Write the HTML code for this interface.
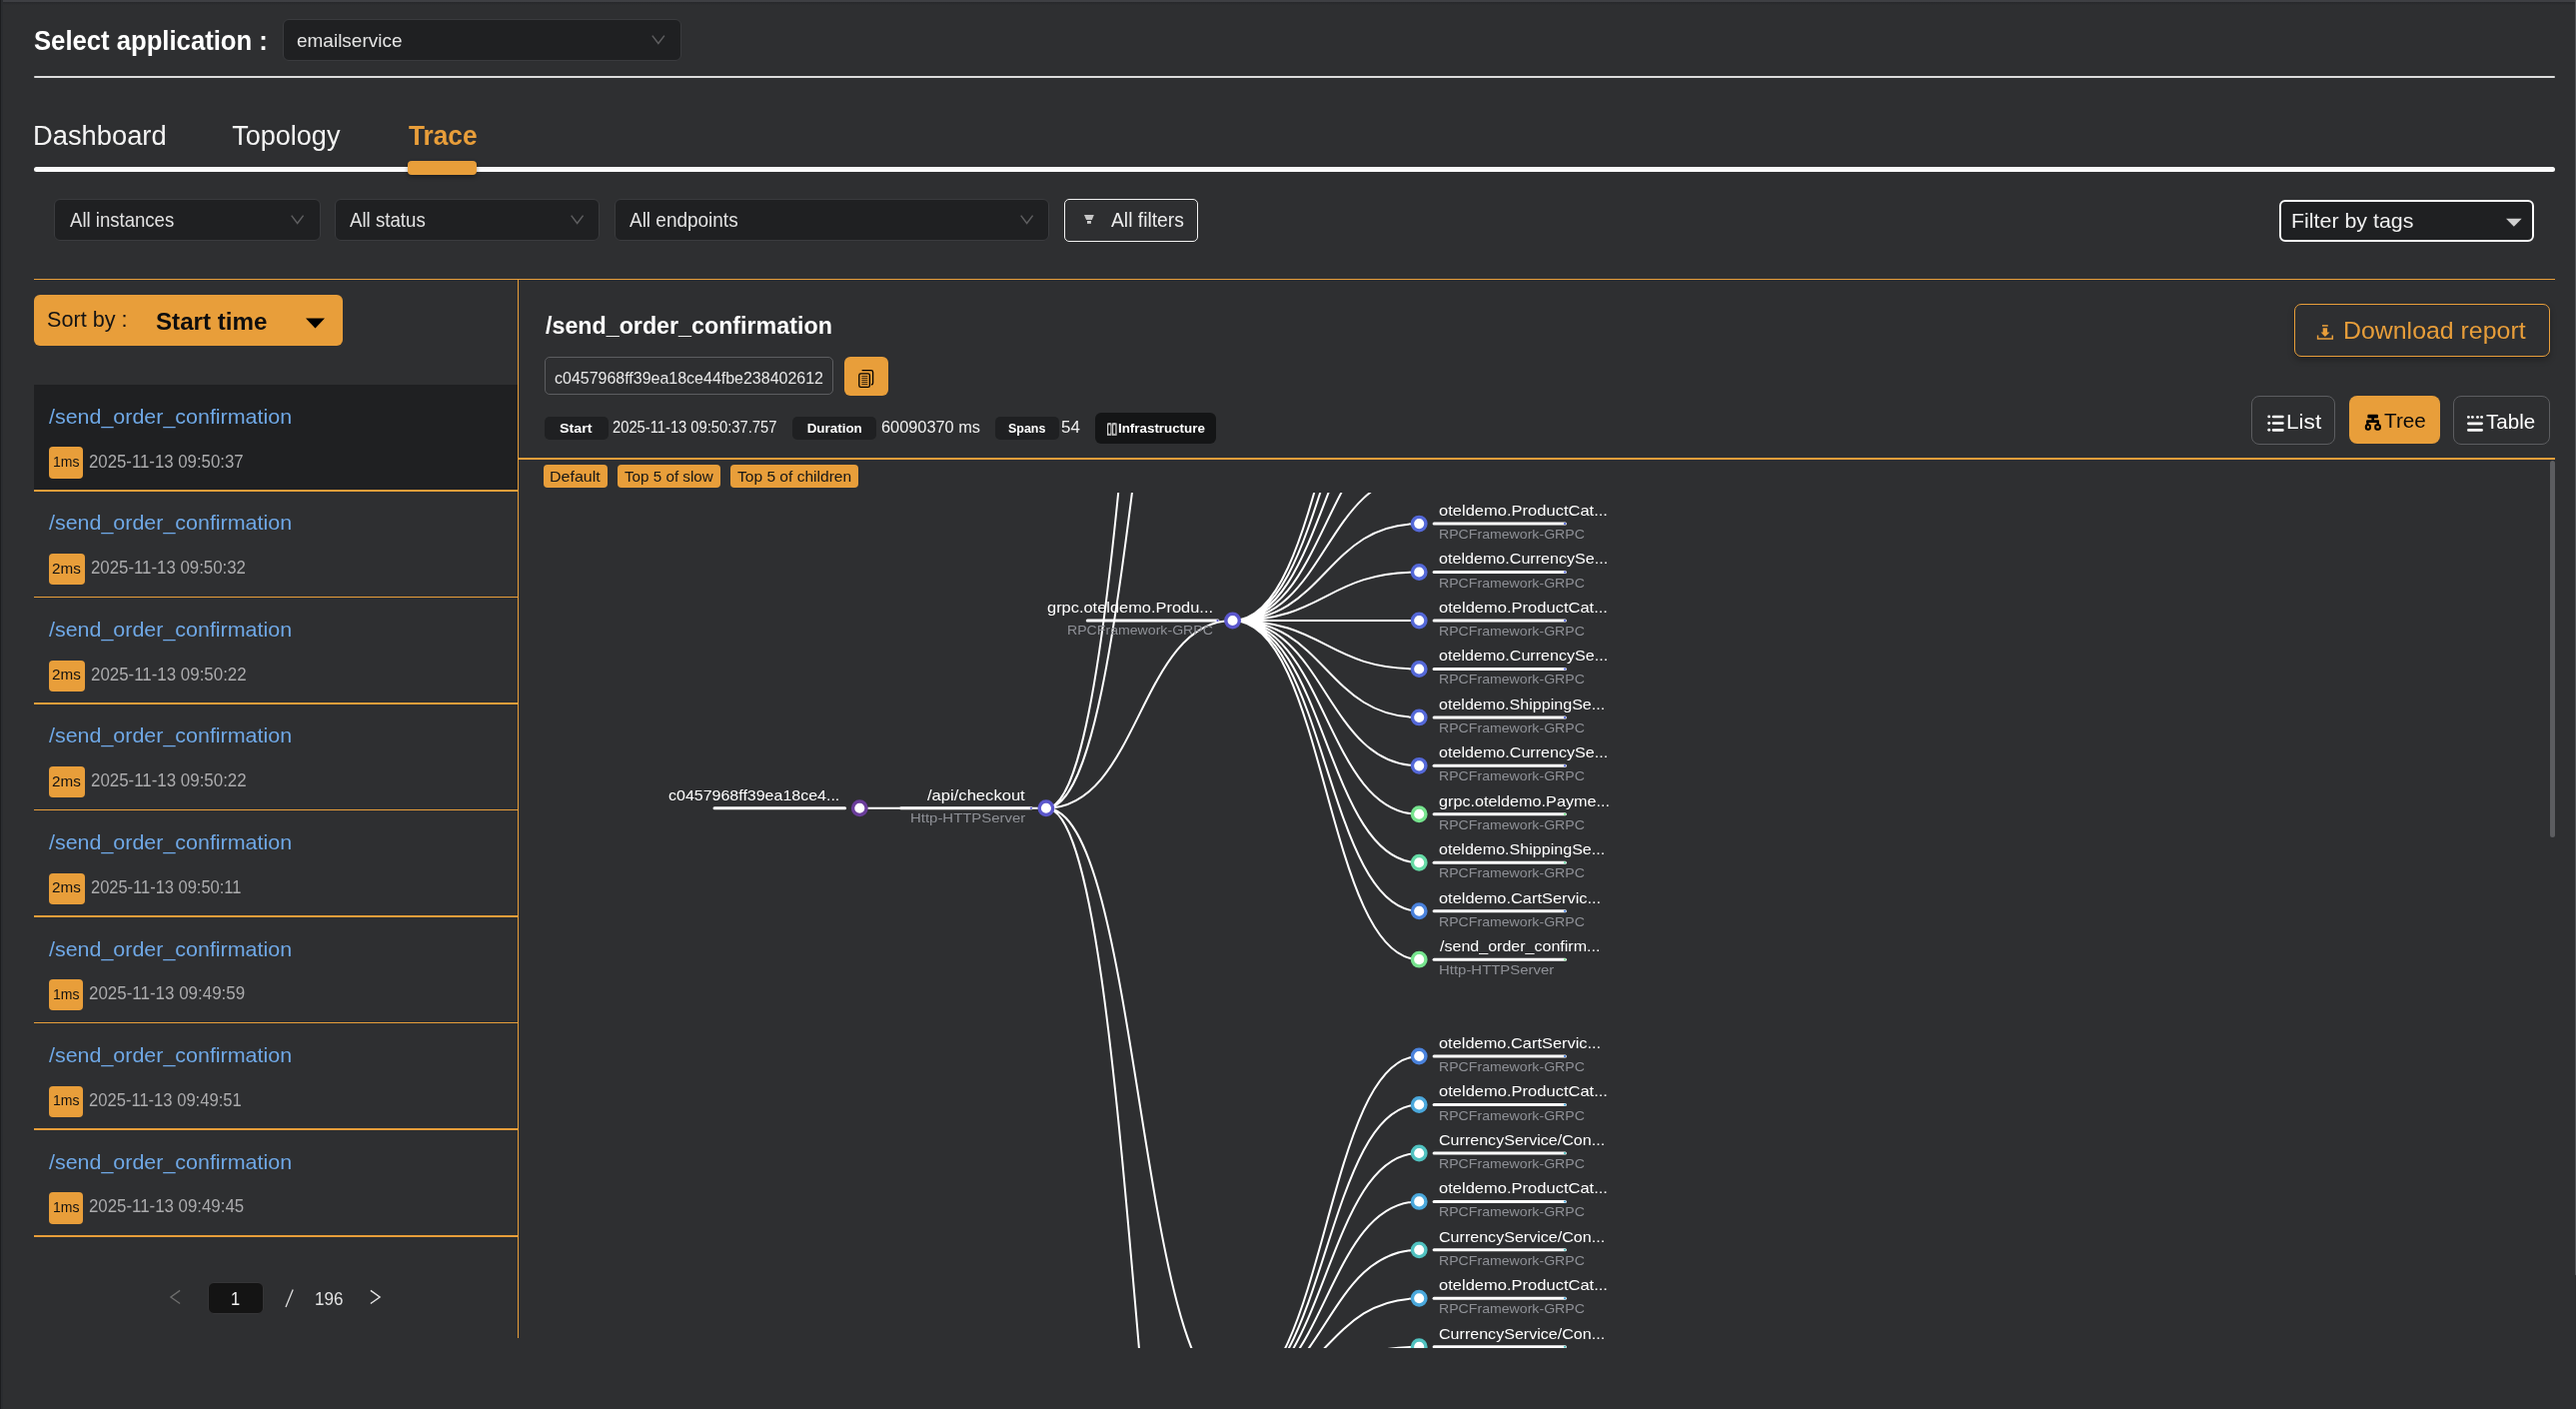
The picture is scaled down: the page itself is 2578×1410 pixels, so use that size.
<!DOCTYPE html>
<html><head><meta charset="utf-8"><title>Trace</title>
<style>
html,body{margin:0;padding:0;}
body{width:2578px;height:1410px;overflow:hidden;background:#2e2f31;position:relative;font-family:"Liberation Sans",sans-serif;}
.a{position:absolute;}
.t{position:absolute;white-space:pre;line-height:1;font-family:"Liberation Sans",sans-serif;}
#tx{position:absolute;left:0;top:0;width:2578px;height:1410px;will-change:transform;}
#tc{will-change:transform;position:absolute;left:519px;top:493px;width:2032px;height:856px;overflow:hidden;}
#tc .t{margin-left:-519px;margin-top:-493px;}
</style></head><body>
<div class="a" style="left:0.00px;top:0.00px;width:2578.00px;height:2.10px;background:#3e3f43;"></div><div class="a" style="left:0.00px;top:2.10px;width:2578.00px;height:2.50px;background:linear-gradient(#26272a,#2e2f31);"></div><div class="a" style="left:0.00px;top:0.00px;width:1.20px;height:1410.00px;background:#1c1d1f;"></div><div class="a" style="left:1.20px;top:0.00px;width:2.30px;height:1410.00px;background:#2a2c2f;"></div><div class="a" style="left:2576.80px;top:0.00px;width:1.20px;height:1276.00px;background:#58595c;border-radius:0.6px;"></div><div class="a" style="left:282.50px;top:19.20px;width:399.00px;height:42.10px;background:#1f2022;border:1px solid #3a3b3e;box-sizing:border-box;border-radius:6px;"></div><svg class="a" style="left:650px;top:33px" width="18" height="14"><polyline points="2.8,2.6 8.85,10.5 14.9,2.6" fill="none" stroke="#5e5e60" stroke-width="1.5"/></svg><div class="a" style="left:34.00px;top:75.60px;width:2523.00px;height:2.50px;background:#dcdcdc;border-radius:1px;"></div><div class="a" style="left:34.00px;top:166.80px;width:2523.00px;height:5.00px;background:#fafafa;border-radius:3px;"></div><div class="a" style="left:407.50px;top:160.60px;width:69.50px;height:14.40px;background:#e89e3a;border-radius:4px;box-shadow:0 2px 4px rgba(0,0,0,.35);"></div><div class="a" style="left:54.40px;top:199.30px;width:266.30px;height:42.00px;background:#1f2022;border:1px solid #3a3b3e;box-sizing:border-box;border-radius:6px;"></div><svg class="a" style="left:290.2px;top:213px" width="16" height="14"><polyline points="1.7,2.6 7.65,10.5 13.6,2.6" fill="none" stroke="#5e5e60" stroke-width="1.5"/></svg><div class="a" style="left:334.70px;top:199.30px;width:265.50px;height:42.00px;background:#1f2022;border:1px solid #3a3b3e;box-sizing:border-box;border-radius:6px;"></div><svg class="a" style="left:569.7px;top:213px" width="16" height="14"><polyline points="1.7,2.6 7.65,10.5 13.6,2.6" fill="none" stroke="#5e5e60" stroke-width="1.5"/></svg><div class="a" style="left:614.90px;top:199.30px;width:435.60px;height:42.00px;background:#1f2022;border:1px solid #3a3b3e;box-sizing:border-box;border-radius:6px;"></div><svg class="a" style="left:1020.0px;top:213px" width="16" height="14"><polyline points="1.7,2.6 7.65,10.5 13.6,2.6" fill="none" stroke="#5e5e60" stroke-width="1.5"/></svg><div class="a" style="left:1065.20px;top:199.20px;width:133.40px;height:42.50px;border:1.5px solid #f2f2f2;box-sizing:border-box;border-radius:5px;"></div><svg class="a" style="left:1080px;top:210px" width="20" height="18" viewBox="1080 210 20 18"><path d="M1085,214.9 H1094.8 L1092.9,219.9 H1087.1 Z" fill="#c6c6c6"/><rect x="1088" y="221" width="3.9" height="2.8" fill="#cdcdcd"/></svg><div class="a" style="left:2281.30px;top:199.50px;width:255.20px;height:42.20px;background:#1f2022;border:2px solid #fafafa;box-sizing:border-box;border-radius:6px;"></div><svg class="a" style="left:2506px;top:217px" width="20" height="12"><polygon points="2,1.7 17.7,1.7 9.85,9.8" fill="#cfcfcf"/></svg><div class="a" style="left:34.00px;top:278.50px;width:2523.00px;height:1.50px;background:#e89e3a;"></div><div class="a" style="left:517.60px;top:279.00px;width:1.40px;height:1060.00px;background:#e89e3a;"></div><div class="a" style="left:518.00px;top:458.40px;width:2039.00px;height:1.50px;background:#e89e3a;"></div><div class="a" style="left:34.00px;top:295.00px;width:309.00px;height:51.00px;background:#e89e3a;border-radius:6px;"></div><svg class="a" style="left:304px;top:316px" width="24" height="14"><polygon points="2,2.4 21,2.4 11.5,12.4" fill="#000"/></svg><div class="a" style="left:34.00px;top:384.50px;width:483.60px;height:105.75px;background:#1f2022;"></div><div class="a" style="left:34.00px;top:490.15px;width:483.60px;height:1.50px;background:#e89e3a;"></div><div class="a" style="left:48.90px;top:447.40px;width:34.30px;height:31.30px;background:#e89e3a;border-radius:4px;"></div><div class="a" style="left:34.00px;top:596.70px;width:483.60px;height:1.50px;background:#e89e3a;"></div><div class="a" style="left:48.90px;top:553.95px;width:36.30px;height:31.30px;background:#e89e3a;border-radius:4px;"></div><div class="a" style="left:34.00px;top:703.25px;width:483.60px;height:1.50px;background:#e89e3a;"></div><div class="a" style="left:48.90px;top:660.50px;width:36.30px;height:31.30px;background:#e89e3a;border-radius:4px;"></div><div class="a" style="left:34.00px;top:809.80px;width:483.60px;height:1.50px;background:#e89e3a;"></div><div class="a" style="left:48.90px;top:767.05px;width:36.30px;height:31.30px;background:#e89e3a;border-radius:4px;"></div><div class="a" style="left:34.00px;top:916.35px;width:483.60px;height:1.50px;background:#e89e3a;"></div><div class="a" style="left:48.90px;top:873.60px;width:36.30px;height:31.30px;background:#e89e3a;border-radius:4px;"></div><div class="a" style="left:34.00px;top:1022.90px;width:483.60px;height:1.50px;background:#e89e3a;"></div><div class="a" style="left:48.90px;top:980.15px;width:34.30px;height:31.30px;background:#e89e3a;border-radius:4px;"></div><div class="a" style="left:34.00px;top:1129.45px;width:483.60px;height:1.50px;background:#e89e3a;"></div><div class="a" style="left:48.90px;top:1086.70px;width:34.30px;height:31.30px;background:#e89e3a;border-radius:4px;"></div><div class="a" style="left:34.00px;top:1236.00px;width:483.60px;height:1.50px;background:#e89e3a;"></div><div class="a" style="left:48.90px;top:1193.25px;width:34.30px;height:31.30px;background:#e89e3a;border-radius:4px;"></div><svg class="a" style="left:166px;top:1288px" width="18" height="20"><polyline points="14.1,3.4 4.9,9.95 14.1,16.5" fill="none" stroke="#6e6e6e" stroke-width="1.3"/></svg><div class="a" style="left:207.80px;top:1283.20px;width:56.10px;height:31.40px;background:#141414;border:1px solid #353537;box-sizing:border-box;border-radius:6px;"></div><svg class="a" style="left:280px;top:1288px" width="20" height="24"><line x1="6" y1="20" x2="13.2" y2="2.6" stroke="#dedede" stroke-width="1.3"/></svg><svg class="a" style="left:366px;top:1288px" width="18" height="20"><polyline points="4.9,3.4 14.1,9.95 4.9,16.5" fill="none" stroke="#e6e6e6" stroke-width="1.4"/></svg><div class="a" style="left:545.20px;top:357.20px;width:288.60px;height:38.20px;border:1px solid #5c5d60;box-sizing:border-box;border-radius:5px;"></div><div class="a" style="left:845.00px;top:356.90px;width:44.10px;height:39.10px;background:#e89e3a;border-radius:6px;"></div><svg class="a" style="left:856px;top:368px" width="22" height="22" viewBox="856 368 22 22">
<path d="M862.6,370.7 H871.8 Q873.6,370.7 873.6,372.5 V383.2 Q873.6,385 871.9,385" fill="none" stroke="#000" stroke-width="1.3"/>
<rect x="859.8" y="373.8" width="10.6" height="13.5" rx="1.6" fill="none" stroke="#000" stroke-width="1.3"/>
<path d="M862.3,376.6 H868.3 M862.3,378.6 H868.3 M862.3,380.6 H868.3 M862.3,382.6 H868.3 M862.3,384.6 H868.3" stroke="#000" stroke-width="0.9" opacity="0.85"/>
</svg><div class="a" style="left:545.30px;top:417.10px;width:63.30px;height:23.40px;background:#1f2022;border-radius:5px;"></div><div class="a" style="left:793.20px;top:417.10px;width:84.00px;height:23.40px;background:#1f2022;border-radius:5px;"></div><div class="a" style="left:996.00px;top:417.10px;width:63.60px;height:23.40px;background:#1f2022;border-radius:5px;"></div><div class="a" style="left:1096.10px;top:413.10px;width:120.70px;height:30.60px;background:#141516;border-radius:6px;"></div><svg class="a" style="left:1104px;top:420px" width="18" height="20" viewBox="1104 420 18 20">
<rect x="1108" y="423.3" width="4.3" height="12.7" rx="0.8" fill="#a6a6a6"/><rect x="1112.7" y="423.3" width="5.1" height="12.7" rx="0.8" fill="#a6a6a6"/>
<path d="M1108.6,435.5 V424.4 Q1108.6,423.8 1109.8,423.8 H1111.5 M1113.3,435.5 V424.4 Q1113.3,423.8 1114.5,423.8 H1116.4" fill="none" stroke="#d0d0d0" stroke-width="1"/>
<rect x="1109.4" y="425.2" width="1.8" height="8.7" rx="0.9" fill="#000"/><rect x="1114.3" y="425.2" width="1.8" height="8.7" rx="0.9" fill="#000"/>
</svg><div class="a" style="left:2296.00px;top:304.20px;width:255.80px;height:52.60px;border:1.5px solid #e89e3a;box-sizing:border-box;border-radius:7px;box-shadow:0 3px 6px rgba(0,0,0,.28);"></div><svg class="a" style="left:2316px;top:322px" width="22" height="22" viewBox="2316 322 22 22">
<rect x="2324" y="325" width="5.8" height="1.8" fill="#e89e3a" opacity="0.85"/>
<path d="M2324.7,328.2 H2329.1 V332.6 H2331.6 L2326.9,337 L2322.6,332.6 H2324.7 Z" fill="#e89e3a"/>
<path d="M2319.6,335.6 V339 H2334.3 V335.6" fill="none" stroke="#e89e3a" stroke-width="1.5"/>
</svg><div class="a" style="left:2253.00px;top:396.30px;width:83.90px;height:49.20px;border:1px solid #5c5d60;box-sizing:border-box;border-radius:8px;"></div><svg class="a" style="left:2266px;top:412px" width="24" height="24" viewBox="2266 412 24 24">
<circle cx="2270.8" cy="416.9" r="1.45" fill="#fff"/><circle cx="2270.8" cy="423.5" r="1.45" fill="#fff"/><circle cx="2270.8" cy="430.3" r="1.45" fill="#fff"/>
<path d="M2275.1,417 H2284.4 M2275.1,423.5 H2284.4 M2275.1,430.4 H2284.4" stroke="#fff" stroke-width="2.7" stroke-linecap="round"/>
</svg><div class="a" style="left:2351.00px;top:396.00px;width:91.00px;height:48.00px;background:#e89e3a;border-radius:8px;"></div><svg class="a" style="left:2364px;top:412px" width="22" height="22" viewBox="2364 412 22 22">
<rect x="2369.4" y="414.8" width="10.6" height="3.8" rx="1" fill="#000"/>
<rect x="2373.4" y="418" width="2.6" height="2.8" fill="#000"/>
<rect x="2368.3" y="420.3" width="12.6" height="2.6" rx="0.6" fill="#000"/>
<rect x="2368.3" y="421" width="2.3" height="4" fill="#000"/>
<rect x="2378.6" y="421" width="2.3" height="4" fill="#000"/>
<rect x="2367.85" y="425.2" width="4.1" height="4.4" rx="1.4" fill="none" stroke="#000" stroke-width="2.1"/>
<rect x="2377.25" y="425.2" width="4.6" height="4.4" rx="1.4" fill="none" stroke="#000" stroke-width="2.1"/>
</svg><div class="a" style="left:2455.00px;top:396.30px;width:96.80px;height:49.20px;border:1px solid #5c5d60;box-sizing:border-box;border-radius:8px;"></div><svg class="a" style="left:2466px;top:412px" width="22" height="22" viewBox="2466 412 22 22">
<circle cx="2470.4" cy="417.4" r="1.4" fill="#fff"/><circle cx="2474.4" cy="417.4" r="1.4" fill="#fff"/><circle cx="2479.5" cy="417.4" r="1.4" fill="#fff"/><circle cx="2483.6" cy="417.4" r="1.4" fill="#fff"/>
<path d="M2470.4,423.8 H2483.6 M2470.4,430.4 H2483.6" stroke="#fff" stroke-width="2.7" stroke-linecap="round"/>
</svg><div class="a" style="left:544.20px;top:465.10px;width:63.80px;height:22.80px;background:#e89e3a;border-radius:4px;"></div><div class="a" style="left:618.10px;top:465.10px;width:102.70px;height:22.80px;background:#e89e3a;border-radius:4px;"></div><div class="a" style="left:731.00px;top:465.10px;width:128.00px;height:22.80px;background:#e89e3a;border-radius:4px;"></div><div class="a" style="left:2552.00px;top:460.80px;width:5.00px;height:377.20px;background:#5c5d60;border-radius:2.5px;"></div>
<div id="tx"><span class="t" style="left:33.76px;top:27.00px;font-size:27.2px;color:#ffffff;font-weight:700;transform:scaleX(0.9439);transform-origin:0 0;">Select application :</span><span class="t" style="left:296.67px;top:32.00px;font-size:18.5px;color:#e4e4e4;transform:scaleX(1.0257);transform-origin:0 0;">emailservice</span><span class="t" style="left:32.88px;top:123.00px;font-size:27px;color:#f4f4f4;transform:scaleX(1.0117);transform-origin:0 0;">Dashboard</span><span class="t" style="left:232.30px;top:123.00px;font-size:27px;color:#f4f4f4;">Topology</span><span class="t" style="left:408.50px;top:123.00px;font-size:27px;color:#e89e3a;font-weight:700;transform:scaleX(0.9714);transform-origin:0 0;">Trace</span><span class="t" style="left:69.80px;top:210.00px;font-size:20.3px;color:#e2e2e2;transform:scaleX(0.9150);transform-origin:0 0;">All instances</span><span class="t" style="left:350.10px;top:210.00px;font-size:20.3px;color:#e2e2e2;transform:scaleX(0.9207);transform-origin:0 0;">All status</span><span class="t" style="left:630.30px;top:210.00px;font-size:20.3px;color:#e2e2e2;transform:scaleX(0.9353);transform-origin:0 0;">All endpoints</span><span class="t" style="left:1111.80px;top:211.00px;font-size:19.5px;color:#ececec;transform:scaleX(0.9890);transform-origin:0 0;">All filters</span><span class="t" style="left:2292.76px;top:210.00px;font-size:21px;color:#f0f0f0;transform:scaleX(1.0186);transform-origin:0 0;">Filter by tags</span><span class="t" style="left:46.99px;top:310.00px;font-size:21.5px;color:#141414;transform:scaleX(1.0052);transform-origin:0 0;">Sort by :</span><span class="t" style="left:155.96px;top:311.00px;font-size:23.3px;color:#0e0e0e;font-weight:700;transform:scaleX(1.0377);transform-origin:0 0;">Start time</span><span class="t" style="left:49.30px;top:407.00px;font-size:20.6px;color:#6fa8e6;transform:scaleX(1.0409);transform-origin:0 0;">/send_order_confirmation</span><span class="t" style="left:52.50px;top:454.00px;font-size:15.5px;color:#111;transform:scaleX(0.9036);transform-origin:0 0;">1ms</span><span class="t" style="left:88.78px;top:453.00px;font-size:18.2px;color:#ababad;transform:scaleX(0.9229);transform-origin:0 0;">2025-11-13 09:50:37</span><span class="t" style="left:49.30px;top:513.00px;font-size:20.6px;color:#6fa8e6;transform:scaleX(1.0409);transform-origin:0 0;">/send_order_confirmation</span><span class="t" style="left:52.32px;top:561.00px;font-size:15.5px;color:#111;transform:scaleX(0.9821);transform-origin:0 0;">2ms</span><span class="t" style="left:90.78px;top:559.00px;font-size:18.2px;color:#ababad;transform:scaleX(0.9247);transform-origin:0 0;">2025-11-13 09:50:32</span><span class="t" style="left:49.30px;top:620.00px;font-size:20.6px;color:#6fa8e6;transform:scaleX(1.0409);transform-origin:0 0;">/send_order_confirmation</span><span class="t" style="left:52.32px;top:667.00px;font-size:15.5px;color:#111;transform:scaleX(0.9821);transform-origin:0 0;">2ms</span><span class="t" style="left:90.77px;top:666.00px;font-size:18.2px;color:#ababad;transform:scaleX(0.9289);transform-origin:0 0;">2025-11-13 09:50:22</span><span class="t" style="left:49.30px;top:726.00px;font-size:20.6px;color:#6fa8e6;transform:scaleX(1.0409);transform-origin:0 0;">/send_order_confirmation</span><span class="t" style="left:52.32px;top:774.00px;font-size:15.5px;color:#111;transform:scaleX(0.9821);transform-origin:0 0;">2ms</span><span class="t" style="left:90.77px;top:772.00px;font-size:18.2px;color:#ababad;transform:scaleX(0.9289);transform-origin:0 0;">2025-11-13 09:50:22</span><span class="t" style="left:49.30px;top:833.00px;font-size:20.6px;color:#6fa8e6;transform:scaleX(1.0409);transform-origin:0 0;">/send_order_confirmation</span><span class="t" style="left:52.32px;top:880.00px;font-size:15.5px;color:#111;transform:scaleX(0.9821);transform-origin:0 0;">2ms</span><span class="t" style="left:90.80px;top:879.00px;font-size:18.2px;color:#ababad;transform:scaleX(0.9049);transform-origin:0 0;">2025-11-13 09:50:11</span><span class="t" style="left:49.30px;top:940.00px;font-size:20.6px;color:#6fa8e6;transform:scaleX(1.0409);transform-origin:0 0;">/send_order_confirmation</span><span class="t" style="left:52.50px;top:987.00px;font-size:15.5px;color:#111;transform:scaleX(0.9036);transform-origin:0 0;">1ms</span><span class="t" style="left:88.77px;top:985.00px;font-size:18.2px;color:#ababad;transform:scaleX(0.9319);transform-origin:0 0;">2025-11-13 09:49:59</span><span class="t" style="left:49.30px;top:1046.00px;font-size:20.6px;color:#6fa8e6;transform:scaleX(1.0409);transform-origin:0 0;">/send_order_confirmation</span><span class="t" style="left:52.50px;top:1093.00px;font-size:15.5px;color:#111;transform:scaleX(0.9036);transform-origin:0 0;">1ms</span><span class="t" style="left:88.79px;top:1092.00px;font-size:18.2px;color:#ababad;transform:scaleX(0.9114);transform-origin:0 0;">2025-11-13 09:49:51</span><span class="t" style="left:49.30px;top:1153.00px;font-size:20.6px;color:#6fa8e6;transform:scaleX(1.0409);transform-origin:0 0;">/send_order_confirmation</span><span class="t" style="left:52.50px;top:1200.00px;font-size:15.5px;color:#111;transform:scaleX(0.9036);transform-origin:0 0;">1ms</span><span class="t" style="left:88.77px;top:1198.00px;font-size:18.2px;color:#ababad;transform:scaleX(0.9259);transform-origin:0 0;">2025-11-13 09:49:45</span><span class="t" style="left:231.01px;top:1292.00px;font-size:17.5px;color:#f2f2f2;transform:scaleX(0.9375);transform-origin:0 0;">1</span><span class="t" style="left:314.64px;top:1292.00px;font-size:17.8px;color:#e2e2e2;transform:scaleX(0.9571);transform-origin:0 0;">196</span><span class="t" style="left:545.70px;top:314.00px;font-size:24.4px;color:#ffffff;font-weight:700;transform:scaleX(0.9533);transform-origin:0 0;">/send_order_confirmation</span><span class="t" style="left:554.88px;top:370.00px;font-size:17.4px;color:#e8e8e8;transform:scaleX(0.9189);transform-origin:0 0;">c0457968ff39ea18ce44fbe238402612</span><span class="t" style="left:560.38px;top:422.00px;font-size:13.4px;color:#ffffff;font-weight:700;transform:scaleX(1.0690);transform-origin:0 0;">Start</span><span class="t" style="left:612.77px;top:420.00px;font-size:15.8px;color:#f0f0f0;transform:scaleX(0.9326);transform-origin:0 0;">2025-11-13 09:50:37.757</span><span class="t" style="left:807.70px;top:422.00px;font-size:13.4px;color:#ffffff;font-weight:700;">Duration</span><span class="t" style="left:881.87px;top:420.00px;font-size:15.8px;color:#f0f0f0;transform:scaleX(1.0340);transform-origin:0 0;">60090370 ms</span><span class="t" style="left:1008.77px;top:422.00px;font-size:13.4px;color:#ffffff;font-weight:700;transform:scaleX(0.9282);transform-origin:0 0;">Spans</span><span class="t" style="left:1062.43px;top:420.00px;font-size:15.8px;color:#f0f0f0;transform:scaleX(1.0688);transform-origin:0 0;">54</span><span class="t" style="left:1118.60px;top:422.00px;font-size:13.4px;color:#ffffff;font-weight:700;transform:scaleX(0.9977);transform-origin:0 0;">Infrastructure</span><span class="t" style="left:2345.47px;top:319.00px;font-size:24.5px;color:#e89e3a;transform:scaleX(1.0157);transform-origin:0 0;">Download report</span><span class="t" style="left:2287.76px;top:412.00px;font-size:20.2px;color:#ffffff;transform:scaleX(1.1207);transform-origin:0 0;">List</span><span class="t" style="left:2386.00px;top:411.00px;font-size:20.5px;color:#0a0a0a;transform:scaleX(1.0098);transform-origin:0 0;">Tree</span><span class="t" style="left:2487.90px;top:412.00px;font-size:20.2px;color:#ffffff;transform:scaleX(1.0188);transform-origin:0 0;">Table</span><span class="t" style="left:550.12px;top:470.00px;font-size:14.8px;color:#161616;transform:scaleX(1.0826);transform-origin:0 0;">Default</span><span class="t" style="left:625.10px;top:470.00px;font-size:14.8px;color:#161616;transform:scaleX(1.0276);transform-origin:0 0;">Top 5 of slow</span><span class="t" style="left:738.00px;top:470.00px;font-size:14.8px;color:#161616;transform:scaleX(1.0509);transform-origin:0 0;">Top 5 of children</span></div>
<svg class="a" style="left:519px;top:493px;overflow:hidden" width="2032" height="856" viewBox="519 493 2032 856"><g><path d="M860.30,808.7H1046.93 M1046.93,808.70C1140.25,808.70 1140.25,-292.30 1233.57,-292.30 M1046.93,808.70C1140.25,808.70 1140.25,61.60 1233.57,61.60 M1046.93,808.70C1140.25,808.70 1140.25,621.00 1233.57,621.00 M1046.93,808.70C1140.25,808.70 1140.25,1396.30 1233.57,1396.30 M1046.93,808.70C1140.25,808.70 1140.25,1897.10 1233.57,1897.10 M1233.57,621.00C1326.88,621.00 1326.88,281.85 1420.20,281.85 M1233.57,621.00C1326.88,621.00 1326.88,330.30 1420.20,330.30 M1233.57,621.00C1326.88,621.00 1326.88,378.75 1420.20,378.75 M1233.57,621.00C1326.88,621.00 1326.88,427.20 1420.20,427.20 M1233.57,621.00C1326.88,621.00 1326.88,475.65 1420.20,475.65 M1233.57,621.00C1326.88,621.00 1326.88,524.10 1420.20,524.10 M1233.57,621.00C1326.88,621.00 1326.88,572.55 1420.20,572.55 M1233.57,621.00C1326.88,621.00 1326.88,621.00 1420.20,621.00 M1233.57,621.00C1326.88,621.00 1326.88,669.45 1420.20,669.45 M1233.57,621.00C1326.88,621.00 1326.88,717.90 1420.20,717.90 M1233.57,621.00C1326.88,621.00 1326.88,766.35 1420.20,766.35 M1233.57,621.00C1326.88,621.00 1326.88,814.80 1420.20,814.80 M1233.57,621.00C1326.88,621.00 1326.88,863.25 1420.20,863.25 M1233.57,621.00C1326.88,621.00 1326.88,911.70 1420.20,911.70 M1233.57,621.00C1326.88,621.00 1326.88,960.15 1420.20,960.15 M1233.57,1396.30C1326.88,1396.30 1326.88,1057.05 1420.20,1057.05 M1233.57,1396.30C1326.88,1396.30 1326.88,1105.50 1420.20,1105.50 M1233.57,1396.30C1326.88,1396.30 1326.88,1153.95 1420.20,1153.95 M1233.57,1396.30C1326.88,1396.30 1326.88,1202.40 1420.20,1202.40 M1233.57,1396.30C1326.88,1396.30 1326.88,1250.85 1420.20,1250.85 M1233.57,1396.30C1326.88,1396.30 1326.88,1299.30 1420.20,1299.30 M1233.57,1396.30C1326.88,1396.30 1326.88,1347.75 1420.20,1347.75 M1233.57,1396.30C1326.88,1396.30 1326.88,1396.20 1420.20,1396.20 M1233.57,1396.30C1326.88,1396.30 1326.88,1444.65 1420.20,1444.65 M1233.57,1396.30C1326.88,1396.30 1326.88,1493.10 1420.20,1493.10 M1233.57,1396.30C1326.88,1396.30 1326.88,1541.55 1420.20,1541.55 M1233.57,1396.30C1326.88,1396.30 1326.88,1590.00 1420.20,1590.00 M1233.57,1396.30C1326.88,1396.30 1326.88,1638.45 1420.20,1638.45 M1233.57,1396.30C1326.88,1396.30 1326.88,1686.90 1420.20,1686.90 M1233.57,1396.30C1326.88,1396.30 1326.88,1735.35 1420.20,1735.35" fill="none" stroke="#ffffff" stroke-width="2"/><line x1="715.00" y1="808.70" x2="845.60" y2="808.70" stroke="#ffffff" stroke-width="3" stroke-linecap="round"/><line x1="901.63" y1="808.70" x2="1032.23" y2="808.70" stroke="#ffffff" stroke-width="3" stroke-linecap="round"/><line x1="1031.73" y1="808.70" x2="1032.13" y2="808.70" stroke="#5b57cc" stroke-width="2" stroke-linecap="round"/><line x1="1088.27" y1="621.00" x2="1218.87" y2="621.00" stroke="#ffffff" stroke-width="3" stroke-linecap="round"/><line x1="1218.37" y1="621.00" x2="1218.77" y2="621.00" stroke="#5b57cc" stroke-width="2" stroke-linecap="round"/><line x1="1435.10" y1="524.10" x2="1566.40" y2="524.10" stroke="#ffffff" stroke-width="3" stroke-linecap="round"/><line x1="1565.90" y1="524.10" x2="1566.30" y2="524.10" stroke="#5468d8" stroke-width="2" stroke-linecap="round"/><line x1="1435.10" y1="572.55" x2="1566.40" y2="572.55" stroke="#ffffff" stroke-width="3" stroke-linecap="round"/><line x1="1565.90" y1="572.55" x2="1566.30" y2="572.55" stroke="#5468d8" stroke-width="2" stroke-linecap="round"/><line x1="1435.10" y1="621.00" x2="1566.40" y2="621.00" stroke="#ffffff" stroke-width="3" stroke-linecap="round"/><line x1="1565.90" y1="621.00" x2="1566.30" y2="621.00" stroke="#5468d8" stroke-width="2" stroke-linecap="round"/><line x1="1435.10" y1="669.45" x2="1566.40" y2="669.45" stroke="#ffffff" stroke-width="3" stroke-linecap="round"/><line x1="1565.90" y1="669.45" x2="1566.30" y2="669.45" stroke="#5468d8" stroke-width="2" stroke-linecap="round"/><line x1="1435.10" y1="717.90" x2="1566.40" y2="717.90" stroke="#ffffff" stroke-width="3" stroke-linecap="round"/><line x1="1565.90" y1="717.90" x2="1566.30" y2="717.90" stroke="#5468d8" stroke-width="2" stroke-linecap="round"/><line x1="1435.10" y1="766.35" x2="1566.40" y2="766.35" stroke="#ffffff" stroke-width="3" stroke-linecap="round"/><line x1="1565.90" y1="766.35" x2="1566.30" y2="766.35" stroke="#5468d8" stroke-width="2" stroke-linecap="round"/><line x1="1435.10" y1="814.80" x2="1566.40" y2="814.80" stroke="#ffffff" stroke-width="3" stroke-linecap="round"/><line x1="1565.90" y1="814.80" x2="1566.30" y2="814.80" stroke="#76e48e" stroke-width="2" stroke-linecap="round"/><line x1="1435.10" y1="863.25" x2="1566.40" y2="863.25" stroke="#ffffff" stroke-width="3" stroke-linecap="round"/><line x1="1565.90" y1="863.25" x2="1566.30" y2="863.25" stroke="#65dba6" stroke-width="2" stroke-linecap="round"/><line x1="1435.10" y1="911.70" x2="1566.40" y2="911.70" stroke="#ffffff" stroke-width="3" stroke-linecap="round"/><line x1="1565.90" y1="911.70" x2="1566.30" y2="911.70" stroke="#4a82dc" stroke-width="2" stroke-linecap="round"/><line x1="1435.10" y1="960.15" x2="1566.40" y2="960.15" stroke="#ffffff" stroke-width="3" stroke-linecap="round"/><line x1="1565.90" y1="960.15" x2="1566.30" y2="960.15" stroke="#76e48e" stroke-width="2" stroke-linecap="round"/><line x1="1435.10" y1="1057.05" x2="1566.40" y2="1057.05" stroke="#ffffff" stroke-width="3" stroke-linecap="round"/><line x1="1565.90" y1="1057.05" x2="1566.30" y2="1057.05" stroke="#4a82dc" stroke-width="2" stroke-linecap="round"/><line x1="1435.10" y1="1105.50" x2="1566.40" y2="1105.50" stroke="#ffffff" stroke-width="3" stroke-linecap="round"/><line x1="1565.90" y1="1105.50" x2="1566.30" y2="1105.50" stroke="#4aa8dc" stroke-width="2" stroke-linecap="round"/><line x1="1435.10" y1="1153.95" x2="1566.40" y2="1153.95" stroke="#ffffff" stroke-width="3" stroke-linecap="round"/><line x1="1565.90" y1="1153.95" x2="1566.30" y2="1153.95" stroke="#50c2c0" stroke-width="2" stroke-linecap="round"/><line x1="1435.10" y1="1202.40" x2="1566.40" y2="1202.40" stroke="#ffffff" stroke-width="3" stroke-linecap="round"/><line x1="1565.90" y1="1202.40" x2="1566.30" y2="1202.40" stroke="#4aa8dc" stroke-width="2" stroke-linecap="round"/><line x1="1435.10" y1="1250.85" x2="1566.40" y2="1250.85" stroke="#ffffff" stroke-width="3" stroke-linecap="round"/><line x1="1565.90" y1="1250.85" x2="1566.30" y2="1250.85" stroke="#50c2c0" stroke-width="2" stroke-linecap="round"/><line x1="1435.10" y1="1299.30" x2="1566.40" y2="1299.30" stroke="#ffffff" stroke-width="3" stroke-linecap="round"/><line x1="1565.90" y1="1299.30" x2="1566.30" y2="1299.30" stroke="#4aa8dc" stroke-width="2" stroke-linecap="round"/><line x1="1435.10" y1="1347.75" x2="1566.40" y2="1347.75" stroke="#ffffff" stroke-width="3" stroke-linecap="round"/><line x1="1565.90" y1="1347.75" x2="1566.30" y2="1347.75" stroke="#50c2c0" stroke-width="2" stroke-linecap="round"/><circle cx="860.30" cy="808.70" r="6.75" fill="#ffffff" stroke="#6a3d9a" stroke-width="3.4"/><circle cx="1046.93" cy="808.70" r="6.75" fill="#ffffff" stroke="#5b57cc" stroke-width="3.4"/><circle cx="1233.57" cy="621.00" r="6.75" fill="#ffffff" stroke="#5b57cc" stroke-width="3.4"/><circle cx="1420.20" cy="524.10" r="6.75" fill="#ffffff" stroke="#5468d8" stroke-width="3.4"/><circle cx="1420.20" cy="572.55" r="6.75" fill="#ffffff" stroke="#5468d8" stroke-width="3.4"/><circle cx="1420.20" cy="621.00" r="6.75" fill="#ffffff" stroke="#5468d8" stroke-width="3.4"/><circle cx="1420.20" cy="669.45" r="6.75" fill="#ffffff" stroke="#5468d8" stroke-width="3.4"/><circle cx="1420.20" cy="717.90" r="6.75" fill="#ffffff" stroke="#5468d8" stroke-width="3.4"/><circle cx="1420.20" cy="766.35" r="6.75" fill="#ffffff" stroke="#5468d8" stroke-width="3.4"/><circle cx="1420.20" cy="814.80" r="6.75" fill="#ffffff" stroke="#76e48e" stroke-width="3.4"/><circle cx="1420.20" cy="863.25" r="6.75" fill="#ffffff" stroke="#65dba6" stroke-width="3.4"/><circle cx="1420.20" cy="911.70" r="6.75" fill="#ffffff" stroke="#4a82dc" stroke-width="3.4"/><circle cx="1420.20" cy="960.15" r="6.75" fill="#ffffff" stroke="#76e48e" stroke-width="3.4"/><circle cx="1420.20" cy="1057.05" r="6.75" fill="#ffffff" stroke="#4a82dc" stroke-width="3.4"/><circle cx="1420.20" cy="1105.50" r="6.75" fill="#ffffff" stroke="#4aa8dc" stroke-width="3.4"/><circle cx="1420.20" cy="1153.95" r="6.75" fill="#ffffff" stroke="#50c2c0" stroke-width="3.4"/><circle cx="1420.20" cy="1202.40" r="6.75" fill="#ffffff" stroke="#4aa8dc" stroke-width="3.4"/><circle cx="1420.20" cy="1250.85" r="6.75" fill="#ffffff" stroke="#50c2c0" stroke-width="3.4"/><circle cx="1420.20" cy="1299.30" r="6.75" fill="#ffffff" stroke="#4aa8dc" stroke-width="3.4"/><circle cx="1420.20" cy="1347.75" r="6.75" fill="#ffffff" stroke="#50c2c0" stroke-width="3.4"/></g></svg>
<div id="tc"><span class="t" style="left:669.35px;top:790.00px;font-size:13.9px;color:#ffffff;transform:scaleX(1.1510);transform-origin:0 0;">c0457968ff39ea18ce4...</span><span class="t" style="left:928.43px;top:790.00px;font-size:13.9px;color:#ffffff;transform:scaleX(1.1939);transform-origin:0 0;">/api/checkout</span><span class="t" style="left:911.03px;top:812.00px;font-size:13.6px;color:#8e9096;transform:scaleX(1.0981);transform-origin:0 0;">Http-HTTPServer</span><span class="t" style="left:1047.59px;top:602.00px;font-size:13.9px;color:#ffffff;transform:scaleX(1.1813);transform-origin:0 0;">grpc.oteldemo.Produ...</span><span class="t" style="left:1067.53px;top:624.00px;font-size:13.6px;color:#8e9096;transform:scaleX(1.0388);transform-origin:0 0;">RPCFramework-GRPC</span><span class="t" style="left:1439.61px;top:505.00px;font-size:13.9px;color:#ffffff;transform:scaleX(1.1893);transform-origin:0 0;">oteldemo.ProductCat...</span><span class="t" style="left:1439.96px;top:528.00px;font-size:13.6px;color:#8e9096;transform:scaleX(1.0388);transform-origin:0 0;">RPCFramework-GRPC</span><span class="t" style="left:1439.64px;top:553.00px;font-size:13.9px;color:#ffffff;transform:scaleX(1.1597);transform-origin:0 0;">oteldemo.CurrencySe...</span><span class="t" style="left:1439.96px;top:577.00px;font-size:13.6px;color:#8e9096;transform:scaleX(1.0388);transform-origin:0 0;">RPCFramework-GRPC</span><span class="t" style="left:1439.61px;top:602.00px;font-size:13.9px;color:#ffffff;transform:scaleX(1.1893);transform-origin:0 0;">oteldemo.ProductCat...</span><span class="t" style="left:1439.96px;top:625.00px;font-size:13.6px;color:#8e9096;transform:scaleX(1.0388);transform-origin:0 0;">RPCFramework-GRPC</span><span class="t" style="left:1439.64px;top:650.00px;font-size:13.9px;color:#ffffff;transform:scaleX(1.1597);transform-origin:0 0;">oteldemo.CurrencySe...</span><span class="t" style="left:1439.96px;top:673.00px;font-size:13.6px;color:#8e9096;transform:scaleX(1.0388);transform-origin:0 0;">RPCFramework-GRPC</span><span class="t" style="left:1439.64px;top:699.00px;font-size:13.9px;color:#ffffff;transform:scaleX(1.1570);transform-origin:0 0;">oteldemo.ShippingSe...</span><span class="t" style="left:1439.96px;top:722.00px;font-size:13.6px;color:#8e9096;transform:scaleX(1.0388);transform-origin:0 0;">RPCFramework-GRPC</span><span class="t" style="left:1439.64px;top:747.00px;font-size:13.9px;color:#ffffff;transform:scaleX(1.1597);transform-origin:0 0;">oteldemo.CurrencySe...</span><span class="t" style="left:1439.96px;top:770.00px;font-size:13.6px;color:#8e9096;transform:scaleX(1.0388);transform-origin:0 0;">RPCFramework-GRPC</span><span class="t" style="left:1439.63px;top:796.00px;font-size:13.9px;color:#ffffff;transform:scaleX(1.1655);transform-origin:0 0;">grpc.oteldemo.Payme...</span><span class="t" style="left:1439.96px;top:819.00px;font-size:13.6px;color:#8e9096;transform:scaleX(1.0388);transform-origin:0 0;">RPCFramework-GRPC</span><span class="t" style="left:1439.64px;top:844.00px;font-size:13.9px;color:#ffffff;transform:scaleX(1.1570);transform-origin:0 0;">oteldemo.ShippingSe...</span><span class="t" style="left:1439.96px;top:867.00px;font-size:13.6px;color:#8e9096;transform:scaleX(1.0388);transform-origin:0 0;">RPCFramework-GRPC</span><span class="t" style="left:1439.62px;top:893.00px;font-size:13.9px;color:#ffffff;transform:scaleX(1.1800);transform-origin:0 0;">oteldemo.CartServic...</span><span class="t" style="left:1439.96px;top:916.00px;font-size:13.6px;color:#8e9096;transform:scaleX(1.0388);transform-origin:0 0;">RPCFramework-GRPC</span><span class="t" style="left:1440.80px;top:941.00px;font-size:13.9px;color:#ffffff;transform:scaleX(1.1543);transform-origin:0 0;">/send_order_confirm...</span><span class="t" style="left:1439.90px;top:964.00px;font-size:13.6px;color:#8e9096;transform:scaleX(1.0981);transform-origin:0 0;">Http-HTTPServer</span><span class="t" style="left:1439.62px;top:1038.00px;font-size:13.9px;color:#ffffff;transform:scaleX(1.1800);transform-origin:0 0;">oteldemo.CartServic...</span><span class="t" style="left:1439.96px;top:1061.00px;font-size:13.6px;color:#8e9096;transform:scaleX(1.0388);transform-origin:0 0;">RPCFramework-GRPC</span><span class="t" style="left:1439.61px;top:1086.00px;font-size:13.9px;color:#ffffff;transform:scaleX(1.1893);transform-origin:0 0;">oteldemo.ProductCat...</span><span class="t" style="left:1439.96px;top:1110.00px;font-size:13.6px;color:#8e9096;transform:scaleX(1.0388);transform-origin:0 0;">RPCFramework-GRPC</span><span class="t" style="left:1439.64px;top:1135.00px;font-size:13.9px;color:#ffffff;transform:scaleX(1.1570);transform-origin:0 0;">CurrencyService/Con...</span><span class="t" style="left:1439.96px;top:1158.00px;font-size:13.6px;color:#8e9096;transform:scaleX(1.0388);transform-origin:0 0;">RPCFramework-GRPC</span><span class="t" style="left:1439.61px;top:1183.00px;font-size:13.9px;color:#ffffff;transform:scaleX(1.1893);transform-origin:0 0;">oteldemo.ProductCat...</span><span class="t" style="left:1439.96px;top:1206.00px;font-size:13.6px;color:#8e9096;transform:scaleX(1.0388);transform-origin:0 0;">RPCFramework-GRPC</span><span class="t" style="left:1439.64px;top:1232.00px;font-size:13.9px;color:#ffffff;transform:scaleX(1.1570);transform-origin:0 0;">CurrencyService/Con...</span><span class="t" style="left:1439.96px;top:1255.00px;font-size:13.6px;color:#8e9096;transform:scaleX(1.0388);transform-origin:0 0;">RPCFramework-GRPC</span><span class="t" style="left:1439.61px;top:1280.00px;font-size:13.9px;color:#ffffff;transform:scaleX(1.1893);transform-origin:0 0;">oteldemo.ProductCat...</span><span class="t" style="left:1439.96px;top:1303.00px;font-size:13.6px;color:#8e9096;transform:scaleX(1.0388);transform-origin:0 0;">RPCFramework-GRPC</span><span class="t" style="left:1439.64px;top:1329.00px;font-size:13.9px;color:#ffffff;transform:scaleX(1.1570);transform-origin:0 0;">CurrencyService/Con...</span><span class="t" style="left:1439.96px;top:1352.00px;font-size:13.6px;color:#8e9096;transform:scaleX(1.0388);transform-origin:0 0;">RPCFramework-GRPC</span></div>
</body></html>
